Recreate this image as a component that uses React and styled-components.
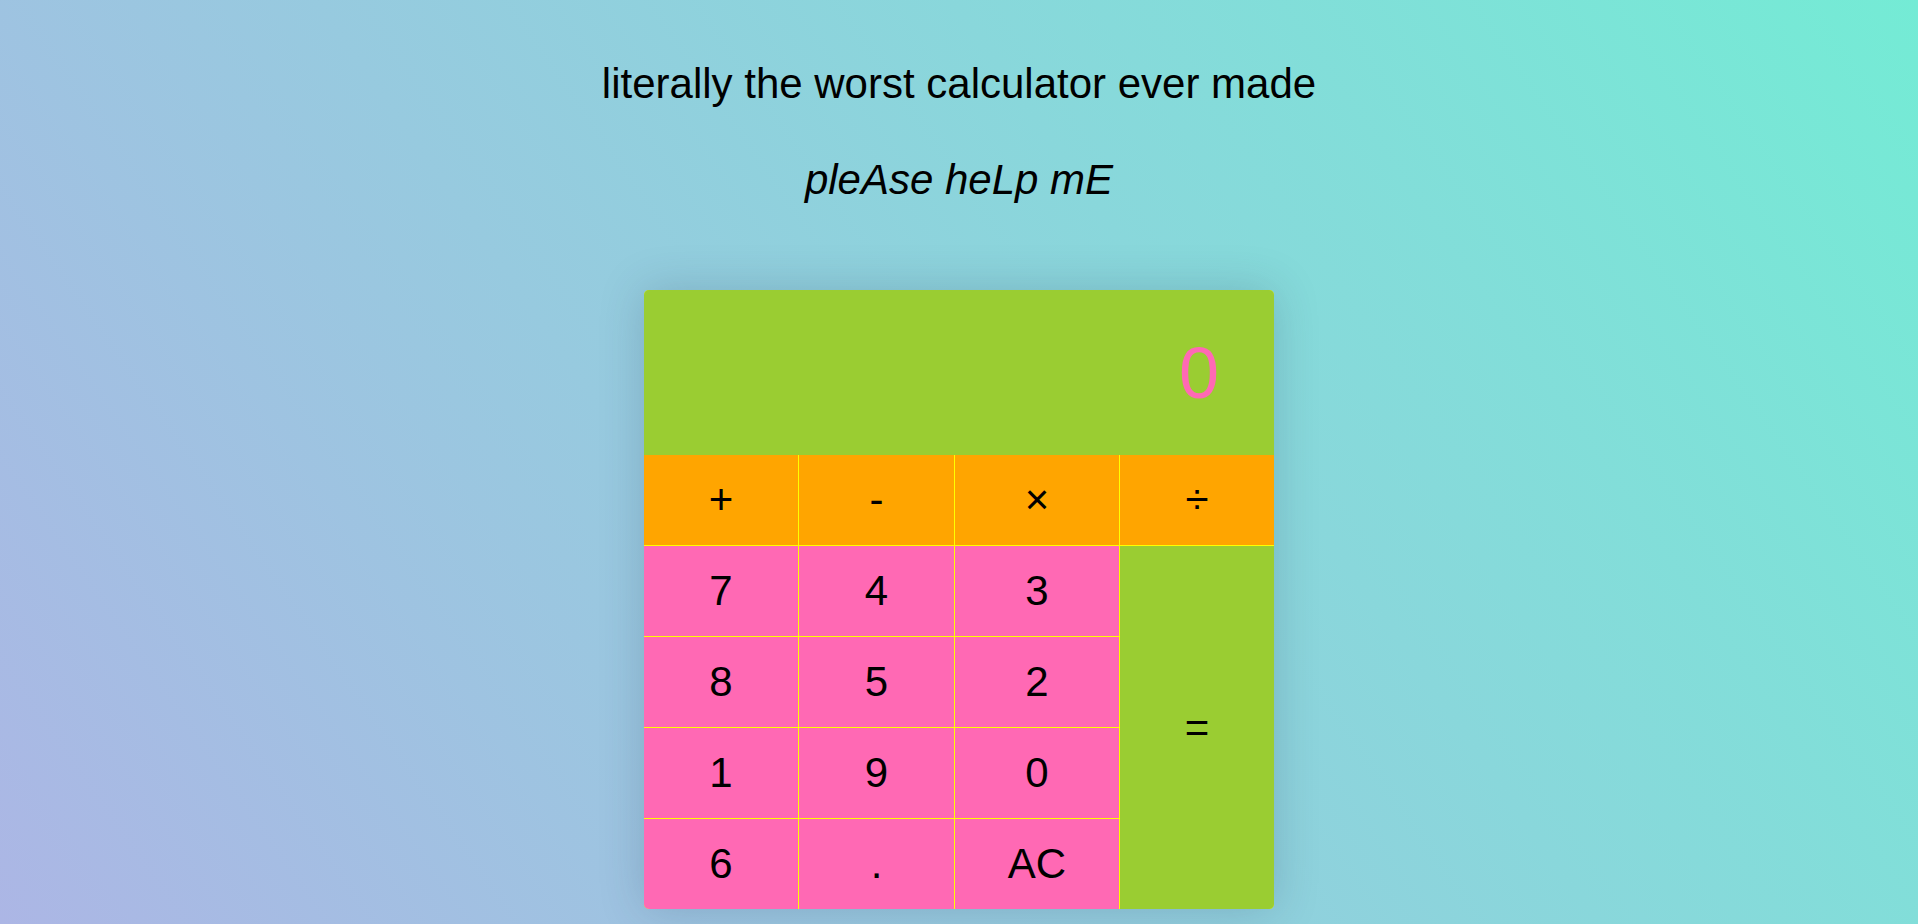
import React from "react";
import styled, { createGlobalStyle } from "styled-components";

const GlobalStyle = createGlobalStyle`
  html, body {
    margin: 0;
    padding: 0;
  }
  body {
    font-family: "Liberation Sans", Arial, sans-serif;
    background: linear-gradient(55deg, #acb6e5, #74ebd5);
    min-height: 100vh;
    overflow: hidden;
  }
`;

const Page = styled.div`
  height: 100vh;
  padding-top: 60px;
  box-sizing: border-box;
  display: flex;
  flex-direction: column;
  align-items: center;
`;

const Title = styled.h1`
  margin: 0;
  font-size: 42px;
  font-weight: normal;
  font-style: ${p => (p.italic ? "italic" : "normal")};
  line-height: 48px;
  color: #000;
  margin-bottom: ${p => p.gap}px;
`;

const Calculator = styled.div`
  width: 630px;
  border-radius: 5px;
  overflow: hidden;
  background: #ffff00;
  box-shadow: 0 0 45px rgba(40, 60, 90, 0.22);
  display: grid;
  grid-template-columns: 154px 155px 164px 154px;
  grid-template-rows: 164px repeat(5, 90px);
  column-gap: 1px;
  row-gap: 1px;
  flex-shrink: 0;
`;

const Display = styled.div`
  grid-column: 1 / -1;
  background: #9acd32;
  margin-bottom: -1px;
  display: flex;
  align-items: center;
  justify-content: flex-end;
  padding-right: 55px;
  font-size: 72px;
  color: #ff69b4;
`;

const Key = styled.button`
  border: none;
  margin: 0;
  padding: 0;
  font-family: "Liberation Sans", Arial, sans-serif;
  font-size: 42px;
  color: #000;
  cursor: pointer;
  background: ${p => p.bg};
  grid-row: ${p => p.rows || "auto"};
  grid-column: ${p => p.col || "auto"};
  display: flex;
  align-items: center;
  justify-content: center;
`;

const ops = ["+", "-", "×", "÷"];
const nums = ["7", "4", "3", "8", "5", "2", "1", "9", "0", "6", ".", "AC"];

export default function App() {
  return (
    <>
      <GlobalStyle />
      <Page>
        <Title gap={48}>literally the worst calculator ever made</Title>
        <Title italic gap={86}>pleAse heLp mE</Title>
        <Calculator>
          <Display>0</Display>
          {ops.map(o => (
            <Key key={o} bg="#ffa500">
              {o}
            </Key>
          ))}
          {nums.map((n, i) => (
            <Key
              key={n}
              bg="#ff69b4"
              col={`${(i % 3) + 1}`}
              rows={`${Math.floor(i / 3) + 3}`}
            >
              {n}
            </Key>
          ))}
          <Key bg="#9acd32" col="4" rows="3 / 7">
            =
          </Key>
        </Calculator>
      </Page>
    </>
  );
}
